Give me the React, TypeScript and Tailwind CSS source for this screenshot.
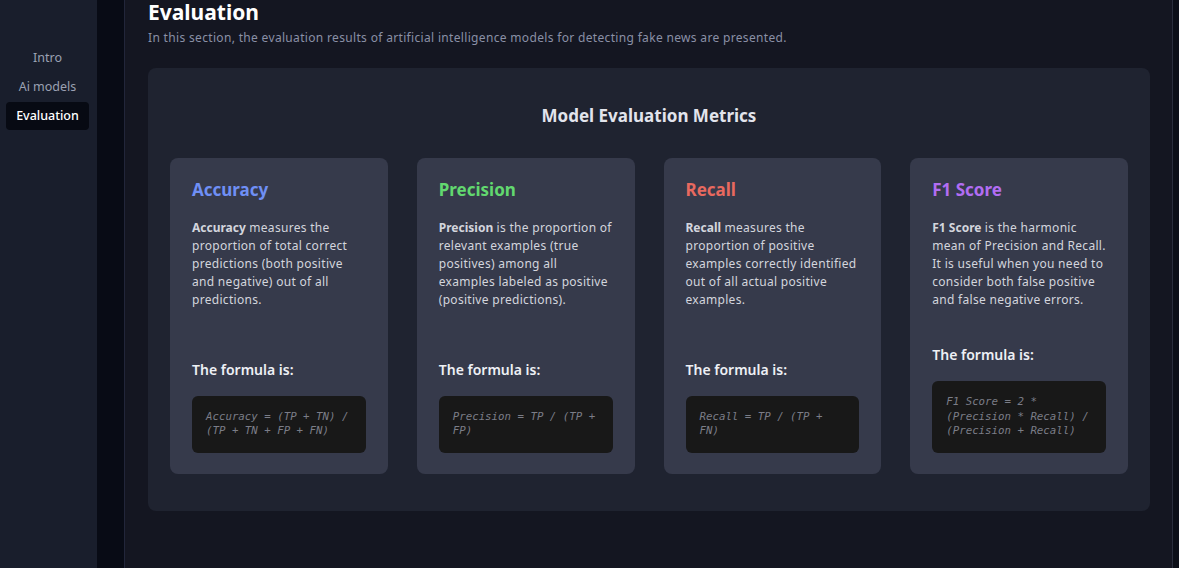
const metrics = [
  {
    name: "Accuracy",
    color: "text-[#6f8ff5]",
    body: " measures the proportion of total correct predictions (both positive and negative) out of all predictions.",
    formula: "Accuracy = (TP + TN) / (TP + TN + FP + FN)",
  },
  {
    name: "Precision",
    color: "text-[#62d86f]",
    body: " is the proportion of relevant examples (true positives) among all examples labeled as positive (positive predictions).",
    formula: "Precision = TP / (TP + FP)",
  },
  {
    name: "Recall",
    color: "text-[#e8695f]",
    body: " measures the proportion of positive examples correctly identified out of all actual positive examples.",
    formula: "Recall = TP / (TP + FN)",
  },
  {
    name: "F1 Score",
    color: "text-[#b26df3]",
    body: " is the harmonic mean of Precision and Recall. It is useful when you need to consider both false positive and false negative errors.",
    formula: "F1 Score = 2 * (Precision * Recall) / (Precision + Recall)",
  },
];

function Sidebar() {
  const items = ["Intro", "Ai models", "Evaluation"];
  return (
    <aside className="w-[97px] shrink-0 bg-[#191e2c] pt-[44px] pl-[6px] pr-[8px] flex flex-col gap-[1px]">
      {items.map((item) => (
        <div
          key={item}
          className={
            item === "Evaluation"
              ? "h-[28px] flex items-center justify-center rounded-[4px] bg-[#070a13] text-[12.5px] font-medium text-white"
              : "h-[28px] flex items-center justify-center text-[12.5px] text-[#9ba1b2]"
          }
        >
          {item}
        </div>
      ))}
    </aside>
  );
}

function MetricCard({ m }: { m: (typeof metrics)[number] }) {
  return (
    <div className="bg-[#363a4b] rounded-[8px] pt-[22px] pb-[21px] px-[22px] flex flex-col">
      <h3 className={`text-[17px] leading-[20px] font-bold ${m.color}`}>{m.name}</h3>
      <p className="mt-[19px] text-[12px] leading-[18px] tracking-[0.3px] text-[#d3d5dd]">
        <span className="font-bold tracking-normal">{m.name}</span>
        {m.body}
      </p>
      <div className="mt-auto pt-[36px]">
        <div className="text-[14px] leading-[20px] font-semibold text-[#eef0f5]">The formula is:</div>
        <div className="mt-[16px] bg-[#181818] rounded-[6px] px-[14px] py-[14px] font-['DejaVu_Sans_Mono',monospace] italic text-[10.75px] leading-[14.5px] text-[#7b7d87]">
          {m.formula}
        </div>
      </div>
    </div>
  );
}

export default function App() {
  return (
    <div className="w-[1179px] h-[568px] overflow-hidden flex bg-[#141621] font-['Noto_Sans',sans-serif]">
      <Sidebar />
      <div className="w-[28px] shrink-0 bg-[#080b15] border-r border-[#22263a]" />
      <main className="flex-1 pl-[23px] pr-[22px] -mt-[2px]">
        <h1 className="text-[21px] leading-[28px] font-bold text-white">Evaluation</h1>
        <p className="mt-[3px] text-[12px] leading-[18px] tracking-[0.33px] text-[#8a90a6]">
          In this section, the evaluation results of artificial intelligence models for detecting fake news are presented.
        </p>
        <section className="mt-[21px] bg-[#1f2330] rounded-[8px] px-[22px] pt-[36px] pb-[37px]">
          <h2 className="text-center text-[17px] leading-[24px] font-bold text-[#e2e4ec]">
            Model Evaluation Metrics
          </h2>
          <div className="mt-[30px] grid grid-cols-4 gap-[29px]">
            {metrics.map((m) => (
              <MetricCard key={m.name} m={m} />
            ))}
          </div>
        </section>
      </main>
      <div className="w-[7px] shrink-0 bg-[#0c0f18] border-l border-[#2a2e3d]" />
    </div>
  );
}
